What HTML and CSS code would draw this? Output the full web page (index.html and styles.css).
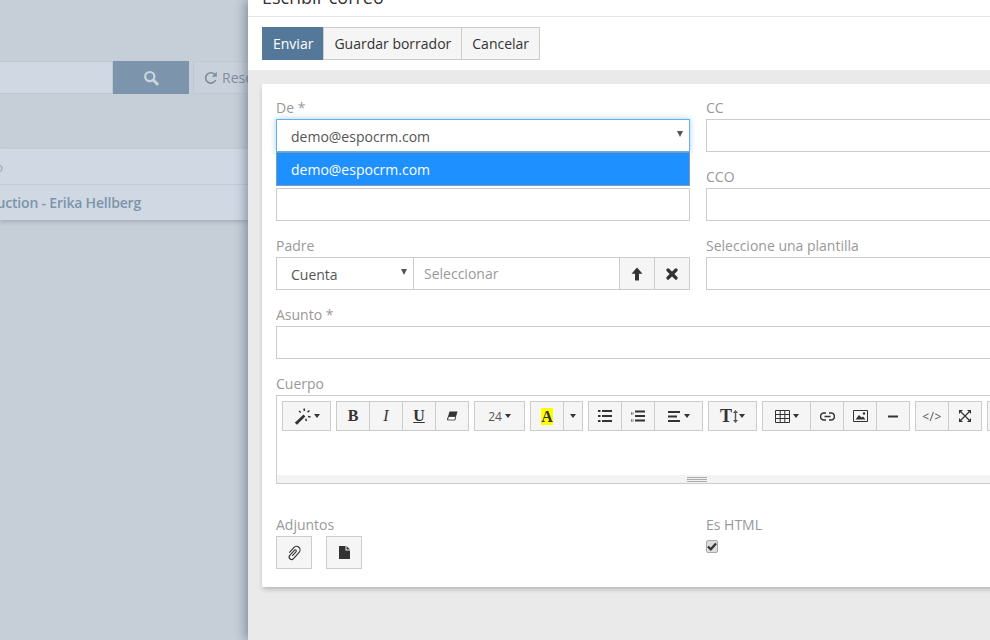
FILE: index.html
```html
<!DOCTYPE html>
<html lang="es">
<head>
  <meta charset="UTF-8">
  <title>Escribir correo</title>
  <link rel="stylesheet" href="styles.css">
</head>
<body>

  <!-- Page behind the modal -->
  <div class="page">
    <div class="search-row">
      <div class="search-input"></div>
      <div class="search-btn">
        <svg width="16" height="16" viewBox="0 0 16 16"><circle cx="6.8" cy="6.6" r="4.6" fill="none" stroke="currentColor" stroke-width="2.2"/><path d="M10.2 10l4 4" stroke="currentColor" stroke-width="3" stroke-linecap="round"/></svg>
      </div>
      <div class="reset-btn">
        <svg width="14" height="14" viewBox="0 0 14 14"><path d="M11.6 9a5.2 5.2 0 1 1-.5-5" fill="none" stroke="currentColor" stroke-width="1.7"/><path d="M12.8 0.8v5h-5z" fill="currentColor"/></svg>
        <span>Reset</span>
      </div>
    </div>
    <div class="list">
      <div class="list-head"><span>Nombre de asunto</span></div>
      <div class="list-row"><span>Introduction - Erika Hellberg</span></div>
    </div>
  </div>

  <!-- Compose modal -->
  <div class="modal">
    <div class="modal-header"><h4>Escribir correo</h4></div>
    <div class="modal-actions">
      <button class="btn btn-primary">Enviar</button>
      <button class="btn">Guardar borrador</button>
      <button class="btn">Cancelar</button>
    </div>
    <div class="modal-body">
      <div class="panel">

        <div class="form-grid">
          <div class="field from-field">
            <label>De *</label>
            <div class="select focused">demo@espocrm.com<i class="caret"></i></div>
            <div class="dropdown">demo@espocrm.com</div>
          </div>
          <div class="field">
            <label>CC</label>
            <div class="input"></div>
          </div>
          <div class="field">
            <label></label>
            <div class="input"></div>
          </div>
          <div class="field">
            <label>CCO</label>
            <div class="input"></div>
          </div>
          <div class="field">
            <label>Padre</label>
            <div class="parent-group">
              <div class="select parent-type">Cuenta<i class="caret"></i></div>
              <div class="input parent-name">Seleccionar</div>
              <div class="addon">
                <svg width="12" height="14" viewBox="0 0 12 14"><path d="M6 .5L11.5 6.8H8V13.5H4V6.8H.5z" fill="#333"/></svg>
              </div>
              <div class="addon">
                <svg width="12" height="12" viewBox="0 0 12 12"><path d="M2 2l8 8M10 2l-8 8" stroke="#333" stroke-width="3.2" stroke-linecap="round"/></svg>
              </div>
            </div>
          </div>
          <div class="field">
            <label>Seleccione una plantilla</label>
            <div class="input"></div>
          </div>
        </div>

        <div class="field">
          <label>Asunto *</label>
          <div class="input"></div>
        </div>

        <div class="field body-field">
          <label>Cuerpo</label>
          <div class="editor">
            <div class="toolbar">
              <div class="tool-group">
                <div class="tool w49">
                  <svg width="17" height="17" viewBox="0 0 17 17"><path d="M.8 14.800L9.500 6.600l1.800 1.800L3 16.800z" fill="#333"/><path d="M10 .5l.5 2.500M15.500 2.500l-2 1.800M16.500 9l-2.500-.5M5 3l1.800 1.500M12.500 13l-.8-2.200" stroke="#333" stroke-width="1.500"/></svg>
                  <i class="caret-sm"></i>
                </div>
              </div>
              <div class="tool-group">
                <div class="tool serif bold">B</div>
                <div class="tool serif italic">I</div>
                <div class="tool serif bold under">U</div>
                <div class="tool">
                  <svg width="12" height="12" viewBox="0 0 12 12"><path d="M3.500 1.500H11.500L9 10H1z" fill="#333"/><path d="M2.500 6.500H9.600L9 10H1.500z" fill="#fff" stroke="#333" stroke-width=".8"/></svg>
                </div>
              </div>
              <div class="tool-group">
                <div class="tool w51 small">24<i class="caret-sm"></i></div>
              </div>
              <div class="tool-group">
                <div class="tool serif bold"><span class="hilite">A</span></div>
                <div class="tool w20"><i class="caret-sm"></i></div>
              </div>
              <div class="tool-group">
                <div class="tool">
                  <svg width="14" height="12" viewBox="0 0 14 12"><path d="M0 1h2.500M0 6h2.500M0 11h2.500" stroke="#333" stroke-width="2"/><path d="M4 1h10M4 6h10M4 11h10" stroke="#333" stroke-width="1.800"/></svg>
                </div>
                <div class="tool">
                  <svg width="14" height="12" viewBox="0 0 14 12"><path d="M0 3.500h3M0 10.500h3" stroke="#777" stroke-width="2.500" stroke-dasharray="1 .5"/><path d="M4 1.500h10M4 6h10M4 10.500h10" stroke="#333" stroke-width="1.800"/></svg>
                </div>
                <div class="tool w49">
                  <svg width="13" height="11" viewBox="0 0 13 11"><path d="M0 1h12M0 5.500h9M0 10h12" stroke="#333" stroke-width="1.800"/></svg>
                  <i class="caret-sm"></i>
                </div>
              </div>
              <div class="tool-group">
                <div class="tool w49 serif bold big">T<svg width="5" height="13" viewBox="0 0 5 13"><path d="M2.500 0L5 3H3.200V10H5L2.500 13 0 10H1.800V3H0z" fill="#555"/></svg><i class="caret-sm"></i></div>
              </div>
              <div class="tool-group">
                <div class="tool w49">
                  <svg width="15" height="13" viewBox="0 0 15 13"><path d="M.5.500h14v12H.5zM.5 4.500h14M.5 8.500h14M5.200.5v12M9.800.5v12" fill="none" stroke="#333"/></svg>
                  <i class="caret-sm"></i>
                </div>
                <div class="tool">
                  <svg width="15" height="9" viewBox="0 0 15 9"><path d="M6 1H4a3.500 3.500 0 0 0 0 7h2M9 1h2a3.500 3.500 0 0 1 0 7H9M4.500 4.500h6" fill="none" stroke="#333" stroke-width="1.600"/></svg>
                </div>
                <div class="tool">
                  <svg width="15" height="12" viewBox="0 0 15 12"><path d="M.5.500h14v11H.5z" fill="none" stroke="#333"/><path d="M2.500 9.500L6 5l2.500 2.500 1.500-1 2.500 3z" fill="#333"/><circle cx="11" cy="3.500" r="1.200" fill="#333"/></svg>
                </div>
                <div class="tool">
                  <svg width="10" height="3" viewBox="0 0 10 3"><path d="M0 1.500h10" stroke="#333" stroke-width="2"/></svg>
                </div>
              </div>
              <div class="tool-group">
                <div class="tool small code">&lt;/&gt;</div>
                <div class="tool">
                  <svg width="12" height="12" viewBox="0 0 12 12"><path d="M0 0h4L0 4zM12 0v4L8 0zM0 12V8l4 4zM12 12H8l4-4z" fill="#333"/><path d="M2 2l8 8M10 2l-8 8" stroke="#333" stroke-width="1.200"/></svg>
                </div>
              </div>
              <div class="tool-group">
                <div class="tool"></div>
              </div>
            </div>
            <div class="editor-area"></div>
            <div class="resize-bar"><i class="handle"></i></div>
          </div>
        </div>

        <div class="form-grid bottom-row">
          <div class="field">
            <label>Adjuntos</label>
            <div class="attach-btns">
              <div class="attach">
                <svg width="18" height="18" viewBox="0 0 16 16"><path d="M4.600 10.500V4.500a3.200 3.200 0 0 1 6.400 0V12a2.200 2.200 0 0 1-4.400 0V6a1 1 0 0 1 2 0v5" fill="none" stroke="#333" stroke-width="1" transform="rotate(42 8 8)"/></svg>
              </div>
              <div class="attach">
                <svg width="11" height="13" viewBox="0 0 11 13"><path d="M0 0H6.500V4.500H11V13H0zM7.500 0L11 3.500H7.500z" fill="#333"/></svg>
              </div>
            </div>
          </div>
          <div class="field">
            <label>Es HTML</label>
            <div class="check">
              <svg width="10" height="9" viewBox="0 0 10 9"><path d="M1 4.500l2.800 2.800L9 1.500" fill="none" stroke="#333" stroke-width="2.200"/></svg>
            </div>
          </div>
        </div>

      </div>
    </div>
  </div>

</body>
</html>
```

FILE: styles.css
```css
* {
  box-sizing: border-box;
}

html, body {
  height: 100%;
}

body {
  margin: 0;
  overflow: hidden;
  position: relative;
  font-family: "Open Sans", sans-serif;
  font-size: 14px;
  color: #555;
  background-color: #c6ced8;
}

/* page behind the modal */
.page {
  width: 248px;
  padding-top: 61px;
}

.search-row {
  display: flex;
  height: 33px;
  white-space: nowrap;
}

.search-input {
  flex: none;
  width: 113px;
  background-color: #d0d9e3;
  border: 1px solid #bfc8d2;
  border-left: 0;
}

.search-btn {
  flex: none;
  width: 76px;
  background-color: #7c95ad;
  color: #ccd5de;
  display: flex;
  align-items: center;
  justify-content: center;
}

.reset-btn {
  margin-left: 4px;
  flex: 0 0 80px;
  border: 1px solid #bfc8d2;
  background-color: #c9d2dc;
  color: #838d99;
  display: flex;
  align-items: center;
  gap: 4px;
  padding-left: 10px;
}

.list {
  margin-top: 55px;
  background-color: #d0d9e3;
  box-shadow: 0 2px 4px rgba(90, 100, 110, 0.3);
}

.list-head, .list-row {
  display: flex;
  justify-content: flex-end;
  white-space: nowrap;
  align-items: center;
  height: 35px;
}

.list-head {
  height: 36px;
  border-bottom: 1px solid #c3ccd6;
  color: #9aa5b1;
  font-size: 13px;
  padding-right: 245px;
}

.list-row {
  padding-right: 107px;
  color: #7c93ab;
  font-weight: 600;
  letter-spacing: -0.2px;
}

/* modal */
.modal {
  position: absolute;
  left: 248px;
  top: 0;
  width: 890px;
  height: 640px;
  background-color: #fff;
  box-shadow: -3px 0 10px rgba(60, 70, 80, 0.45);
  display: flex;
  flex-direction: column;
}

.modal-header {
  height: 17px;
  border-bottom: 1px solid #e6e6e6;
  padding-left: 14px;
  overflow: hidden;
  display: flex;
  align-items: flex-end;
}

.modal-header h4 {
  margin: 0 0 7px;
  font-size: 18px;
  font-weight: 400;
  line-height: 24px;
  color: #333;
}

.modal-actions {
  display: flex;
  padding: 10px 14px;
  height: 53px;
}

.btn {
  height: 33px;
  padding: 0 10px;
  font-family: inherit;
  font-size: 14px;
  color: #333;
  background-color: #f5f5f5;
  border: 1px solid #ccc;
  margin-left: -1px;
}

.btn-primary {
  margin-left: 0;
  background-color: #54789a;
  border-color: #54789a;
  color: #fff;
}

.modal-body {
  flex: 1;
  background-color: #eaeaea;
  padding: 14px;
}

.panel {
  background-color: #fff;
  padding: 15px 14px 18px;
  height: 503px;
  box-shadow: 0 3px 5px -1px rgba(0, 0, 0, 0.25);
}

.form-grid {
  display: grid;
  grid-template-columns: 414px 414px;
  column-gap: 16px;
  row-gap: 16px;
}

.field {
  position: relative;
}

.field label {
  display: block;
  height: 20px;
  line-height: 18px;
  color: #999;
}

.input, .select {
  height: 33px;
  border: 1px solid #ccc;
  background-color: #fff;
  line-height: 31px;
  position: relative;
}

.select {
  padding-left: 14px;
  line-height: 33px;
}

.select.focused {
  border-color: #66afe9;
  box-shadow: 0 0 6px rgba(102, 175, 233, 0.6);
}

.caret {
  position: absolute;
  right: 6px;
  top: 11px;
  border-left: 3px solid transparent;
  border-right: 3px solid transparent;
  border-top: 6px solid #555;
}

.dropdown {
  position: absolute;
  left: 0;
  top: 53px;
  width: 414px;
  height: 34px;
  padding-left: 14px;
  line-height: 33px;
  background-color: #1e90ff;
  color: #fff;
  border: 1px solid #7d9bb8;
  z-index: 2;
}

.parent-group {
  display: flex;
}

.parent-type {
  flex: none;
  width: 137px;
  border-right: 0;
}

.parent-name {
  flex: 1;
  padding-left: 10px;
  color: #999;
}

.addon {
  flex: none;
  width: 36px;
  height: 33px;
  margin-left: -1px;
  border: 1px solid #ccc;
  background-color: #f5f5f5;
  display: flex;
  align-items: center;
  justify-content: center;
}

.form-grid + .field {
  margin-top: 16px;
}

.panel > .field {
  width: 844px;
}

.body-field {
  margin-top: 16px;
}

/* editor */
.editor {
  height: 89px;
  border: 1px solid #ccc;
  display: flex;
  flex-direction: column;
}

.toolbar {
  display: flex;
  gap: 5px;
  padding: 5px 5px 0;
}

.tool-group {
  display: flex;
}

.tool {
  width: 34px;
  height: 30px;
  margin-left: -1px;
  border: 1px solid #ccc;
  background-color: #f5f5f5;
  color: #333;
  display: flex;
  align-items: center;
  justify-content: center;
  gap: 3px;
  flex: none;
}

.tool:first-child {
  margin-left: 0;
}

.w49 {
  width: 49px;
}

.w51 {
  width: 51px;
}

.w20 {
  width: 20px;
}

.serif {
  font-family: "Liberation Serif", serif;
  font-size: 16px;
}

.bold {
  font-weight: 700;
}

.italic {
  font-style: italic;
}

.under {
  text-decoration: underline;
}

.big {
  font-size: 18px;
  gap: 1px;
}

.small {
  font-size: 12px;
  color: #555;
}

.code {
  letter-spacing: 0.5px;
}

.hilite {
  display: block;
  width: 12px;
  height: 17px;
  line-height: 18px;
  text-align: center;
  background-color: #ff0;
}

.caret-sm {
  border-left: 3px solid transparent;
  border-right: 3px solid transparent;
  border-top: 4px solid #333;
}

.editor-area {
  flex: 1;
}

.resize-bar {
  height: 8px;
  background-color: #f3f3f3;
  display: flex;
  justify-content: center;
}

.handle {
  position: relative;
  left: -1px;
  margin-top: 2px;
  width: 20px;
  height: 5px;
  border-top: 1px solid #aaa;
  border-bottom: 1px solid #aaa;
  background: linear-gradient(#f3f3f3 1px, #aaa 1px, #aaa 2px, #f3f3f3 2px);
}

/* bottom row */
.bottom-row {
  margin-top: 32px;
}

.attach-btns {
  display: flex;
  gap: 14px;
}

.attach {
  width: 36px;
  height: 33px;
  border: 1px solid #ccc;
  background-color: #f5f5f5;
  display: flex;
  align-items: center;
  justify-content: center;
}

.check {
  width: 12px;
  height: 13px;
  margin-top: 4px;
  border: 1px solid #aaa;
  border-radius: 2px;
  background-color: #ddd;
  display: flex;
  align-items: center;
  justify-content: center;
}
```
